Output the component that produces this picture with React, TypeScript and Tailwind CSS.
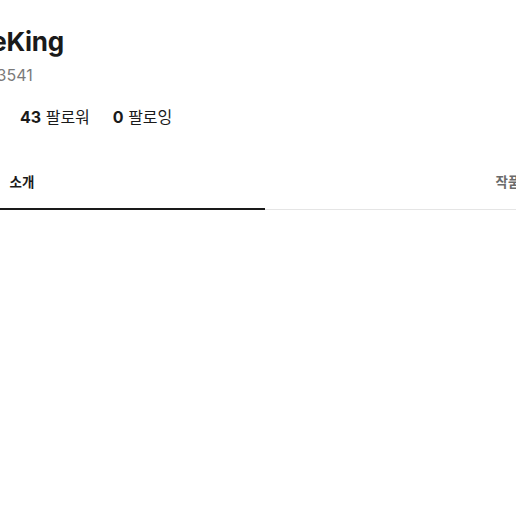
const tabs = ['소개', '작품'];

export default function App() {
  return (
    <div
      className="w-[516px] h-[516px] overflow-hidden bg-white text-[#1a1a1a]"
      style={{ fontFamily: 'Inter, "Noto Sans CJK KR", sans-serif' }}
    >
      <div className="ml-[-221px] w-[972px]">
        <section className="pl-[241px] pt-[26px]">
          <h1 className="-ml-[97px] text-[26px] font-bold leading-[32px] tracking-[-0.3px]">CoffeeKing</h1>
          <p className="-ml-[82px] mt-[7px] text-[16px] leading-[20px] text-[#7a7a7a]">@user83541</p>
          <div className="mt-[22px] flex items-center gap-[23px] text-[16px] leading-[20px]">
            <span>
              <b className="font-bold">43</b> 팔로워
            </span>
            <span>
              <b className="font-bold">0</b> 팔로잉
            </span>
          </div>
        </section>

        <nav className="mt-[35px] flex">
          {tabs.map((t, i) => (
            <button
              key={t}
              className={
                i === 0
                  ? 'flex-1 h-[48px] pb-[5px] text-[13.5px] font-bold text-[#1a1a1a] border-b-2 border-[#1a1a1a]'
                  : 'flex-1 h-[48px] pb-[6px] text-[13.5px] font-bold text-[#6b6b6b] border-b border-[#e5e5e5]'
              }
            >
              {t}
            </button>
          ))}
        </nav>
      </div>
    </div>
  );
}
